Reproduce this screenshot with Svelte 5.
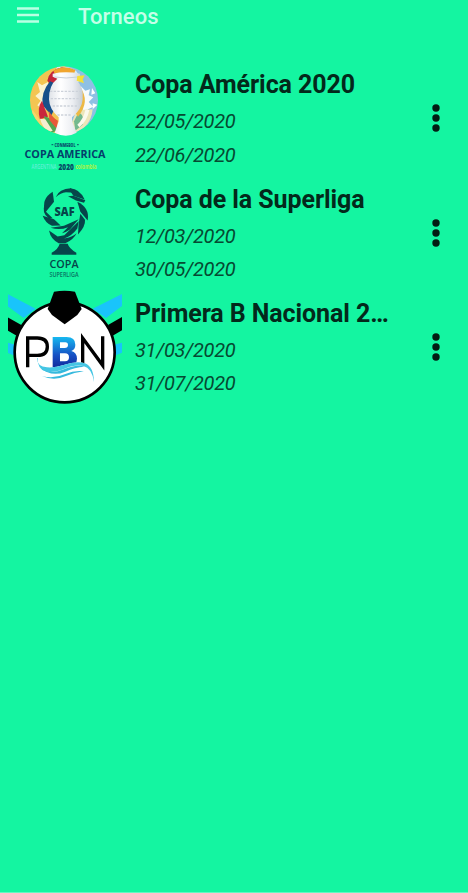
<script>
  const tournaments = [
    { id: 'america', name: 'Copa América 2020', start: '22/05/2020', end: '22/06/2020' },
    { id: 'superliga', name: 'Copa de la Superliga', start: '12/03/2020', end: '30/05/2020' },
    { id: 'pbn', name: 'Primera B Nacional 2020', start: '31/03/2020', end: '31/07/2020' },
  ];
</script>

{#snippet america()}
  <svg class="logo" viewBox="8 61 114 114">
    <defs>
      <linearGradient id="cup" x1="0" x2="1">
        <stop offset="0" stop-color="#dfe3e8" />
        <stop offset=".35" stop-color="#ffffff" />
        <stop offset=".7" stop-color="#eceef2" />
        <stop offset="1" stop-color="#c6cdd4" />
      </linearGradient>
      <clipPath id="disc"><circle cx="120" cy="121" r="102" /></clipPath>
    </defs>
    <g transform="translate(24 60) scale(.33333)">
      <g clip-path="url(#disc)">
        <rect x="15" y="15" width="110" height="215" fill="#f3c552" />
        <rect x="125" y="15" width="100" height="215" fill="#8fc0e4" />
        <path d="M40 66l14 10 18-10 4 60-14 26-22-16 10-14-16-14 14-12z" fill="#fbf3d0" />
        <path d="M100 20q30-4 56 12l18 28-20 10-70-20z" fill="#dceaf2" />
        <path d="M70 62q6-32 44-40l32 8-2 14q-40-2-56 40z" fill="#c5243a" />
        <path d="M88 32q30-20 66-2l-4 12q-30-8-54 8z" fill="#f0a52e" />
        <path d="M78 64q-28 34-22 72l26 30 10-20V70z" fill="#175089" />
        <path d="M54 122q-16 22-6 56l24-8z" fill="#c9263c" />
        <path d="M26 150l22 30 36 42-20 4-50-50z" fill="#f3d56b" />
        <path d="M60 168q26 4 42 42l-18 8q-18-16-24-50z" fill="#50a752" />
        <path d="M48 176l16 2 22 34-12 4q-18-12-26-40z" fill="#f5eed0" />
        <path d="M74 152q14 24 28 30l-4 24-22-26z" fill="#e8583a" />
        <path d="M170 78l14 14 14-4-4 18 14 6-14 14 14 14-16 8 4 18-20-8z" fill="#f8fbfd" />
        <path d="M204 84l10 16-12 4zM206 130l14 4-14 14z" fill="#fff" />
        <path d="M158 150q24 0 48-2-6 56-56 70l-6-32z" fill="#ece5b8" />
        <path d="M164 156q20 14 12 38l-22 18-4-28z" fill="#74b98e" />
        <path d="M196 150q-6 32-30 52l-6-8q18-16 24-44z" fill="#fbf9ec" />
        <path d="M168 80q32 44-6 90l-8-12z" fill="#edb945" />
      </g>
      <path d="M86 41q40-8 82 0v9l-14 8q26 20 22 60-2 30-32 54v12l14 34q-32 18-66 0l12-34v-12q-28-24-29-54-1-42 25-62l-14-6z" fill="url(#cup)" />
      <path d="M92 51q34 6 70 0" fill="none" stroke="#c7ced6" stroke-width="3" />
      <path d="M78 94h94M80 116h92M86 138h76M100 165h44" fill="none" stroke="#cdd2da" stroke-width="4" stroke-dasharray="7 4" />
      <path d="M160 48l22-2-6 12 4 12-22-8z" fill="#f4e039" />
    </g>
    <g font-family="'Open Sans', sans-serif" font-weight="800" text-anchor="middle">
      <text x="65" y="146.700" font-size="5.500" fill="#07506c" textLength="21" lengthAdjust="spacingAndGlyphs">CONMEBOL</text>
      <path d="M51.500 144.700h1.800M77 144.700h1.800" stroke="#07506c" />
      <text x="65" y="157.500" font-size="10.500" font-weight="700" fill="#053f6b" textLength="81" lengthAdjust="spacingAndGlyphs">COPA AMERICA</text>
      <text x="44" y="168.500" font-size="7" font-weight="600" fill="#5ff0d6" textLength="25" lengthAdjust="spacingAndGlyphs">ARGENTINA</text>
      <text x="66.200" y="169.500" font-size="9" fill="#064864" textLength="15.500" lengthAdjust="spacingAndGlyphs">2020</text>
      <text x="86" y="168.500" font-size="7.500" font-weight="700" fill="#b0f244" textLength="21" lengthAdjust="spacingAndGlyphs">colombia</text>
    </g>
  </svg>
{/snippet}

{#snippet superliga()}
  <svg class="logo" viewBox="8 175.500 114 114">
    <g transform="translate(38 184) scale(.33333)" fill="#06454a">
      <path d="M44 22l4 30-26 32q-14-40 22-62z" />
      <path d="M53 38q10-26 46-27l11 14-26-2q-16 2-31 15z" />
      <path d="M96 11q30 2 44 34l-34-11q-10-12-10-23z" />
      <path d="M90 35l16-1 36 13-4 8-24-7z" />
      <path d="M118 52q38 18 31 56l-22-26z" />
      <path d="M127 88l14 18q2 20-21 44l2-32z" />
      <path d="M20 60l4 22 20 19-12 0q-22-16-12-41z" />
      <path d="M14 94l34 10 20 19-26 1q-20-8-28-30z" />
      <path d="M38 130l40-6 44-20-26 31q-14 10-24 11l18-18q-24 10-52 2z" />
      <path d="M33 138l26 18 20-4 43-42-4 22q-18 24-40 30 26-4 38-16-10 20-34 30H62q-24-12-29-38z" />
      <path d="M65 178h24q4 14 26 27v6H41v-6q20-11 24-27z" />
    </g>
    <g font-family="'Open Sans', sans-serif" fill="#06454a" text-anchor="middle">
      <text x="64.500" y="215.700" font-size="12.500" font-weight="800" textLength="20" lengthAdjust="spacingAndGlyphs">SAF</text>
      <text x="64" y="267.300" font-size="10.500" font-weight="600" textLength="29" lengthAdjust="spacingAndGlyphs">COPA</text>
      <text x="64" y="276" font-size="6.500" font-weight="600" fill="#087461" textLength="29" lengthAdjust="spacingAndGlyphs">SUPERLIGA</text>
    </g>
  </svg>
{/snippet}

{#snippet pbn()}
  <svg class="logo" viewBox="8 290 114 114">
    <defs>
      <linearGradient id="blue" x1="0" y1="0" x2="0" y2="1">
        <stop offset="0" stop-color="#16b9f0" />
        <stop offset=".6" stop-color="#1750c4" />
        <stop offset="1" stop-color="#102a9c" />
      </linearGradient>
    </defs>
    <g transform="translate(0 284) scale(.33333)">
      <path d="M22 30l85 44-36 28-49-36zM366 30l-88 44 40 28 48-36zM22 176l24 6v34l-24-10zM366 176l-24 6v34l24-10z" fill="#19c4fb" />
      <path d="M22 99l42 24-14 32-28-16zM366 99l-42 24 14 32 28-16z" fill="#000" />
      <circle cx="194" cy="205" r="150" fill="#fff" stroke="#000" stroke-width="8" />
      <path d="M162 23q32-6 63 0l20 52-13 18-38 28-38-28-13-18z" fill="#000" />
      <path d="M83 250v-88h29q30 0 30 26t-30 26H83M248 250v-88l60 82v-87" fill="none" stroke="#000" stroke-width="10" />
      <path fill-rule="evenodd" d="M158 159h42q26 0 26 23 0 14-12 19 17 5 17 23 0 26-32 26h-41zM180 175v17h14q10 0 10-9t-10-8zM180 208v24h15q12 0 12-12t-12-12z" fill="url(#blue)" />
      <path d="M111 222q0 26 30 28 24 2 50-7 38-13 64-5 26 10 27 56-10-36-38-42-24-4-60 10-36 14-62 6-14-4-11-12-6-10 0-34z" fill="#fff" />
      <path d="M111 222q0 26 30 28 24 2 50-7 38-13 64-5 26 10 27 56-6-42-32-48-24-6-56 8-36 14-58 8-24-8-23-40z" fill="#45c6e4" />
      <path d="M118 250q30 24 74 6 36-16 62-8-30 2-58 15-42 18-78-13zM126 276q34 10 70-6 28-12 56-8-30 4-54 14-36 16-72 0z" fill="#36b9dd" />
    </g>
  </svg>
{/snippet}

<main>
  <header>
    <svg class="menu" viewBox="0 0 22 18"><path d="M0 2.500h22M0 9h22M0 15.500h22" stroke="#b9ffe3" stroke-width="2.600" /></svg>
    <h1>Torneos</h1>
  </header>
  <ul>
    {#each tournaments as t (t.id)}
      <li>
        {#if t.id === 'america'}{@render america()}{:else if t.id === 'superliga'}{@render superliga()}{:else}{@render pbn()}{/if}
        <div class="info">
          <h2>{t.name}</h2>
          <p>{t.start}</p>
          <p>{t.end}</p>
        </div>
        <button aria-label="Opciones">
          <svg viewBox="0 0 8 28"><circle cx="4" cy="4" r="3.700" /><circle cx="4" cy="14" r="3.700" /><circle cx="4" cy="24" r="3.700" /></svg>
        </button>
      </li>
    {/each}
  </ul>
</main>

<style>
  main {
    box-sizing: border-box;
    width: 468px;
    height: 893px;
    overflow: hidden;
    background: #14f5a1;
    border-bottom: 1px solid #62f9c1;
    font-family: Roboto, sans-serif;
    color: #03291b;
  }
  header {
    display: flex;
    height: 61px;
    padding-left: 16.5px;
    gap: 39.5px;
  }
  .menu {
    width: 22px;
    height: 18px;
    margin-top: 6px;
  }
  h1 {
    margin: 3px 0 0;
    font-size: 22px;
    line-height: 28px;
    font-weight: 500;
    letter-spacing: 0.1px;
    color: #c4ffe8;
  }
  ul {
    margin: 0;
    padding: 0;
    list-style: none;
  }
  li {
    display: flex;
    align-items: center;
    height: 114.4px;
    padding-left: 8px;
  }
  .logo {
    flex: none;
    width: 114px;
    height: 114px;
  }
  .info {
    width: 256px;
    height: 114px;
    margin-left: 13px;
  }
  h2 {
    margin: 8px 0 4px;
    font-size: 25px;
    line-height: 32px;
    font-weight: 700;
    letter-spacing: -0.08px;
    white-space: nowrap;
    overflow: hidden;
    text-overflow: ellipsis;
  }
  p {
    margin: 0;
    font-size: 20px;
    line-height: 33.5px;
    font-style: italic;
    letter-spacing: -0.28px;
    color: #064a32;
  }
  button {
    display: flex;
    margin: 0 0 0 41px;
    padding: 0;
    border: 0;
    background: none;
  }
  button svg {
    width: 8px;
    height: 28px;
    fill: #031d13;
  }
</style>
